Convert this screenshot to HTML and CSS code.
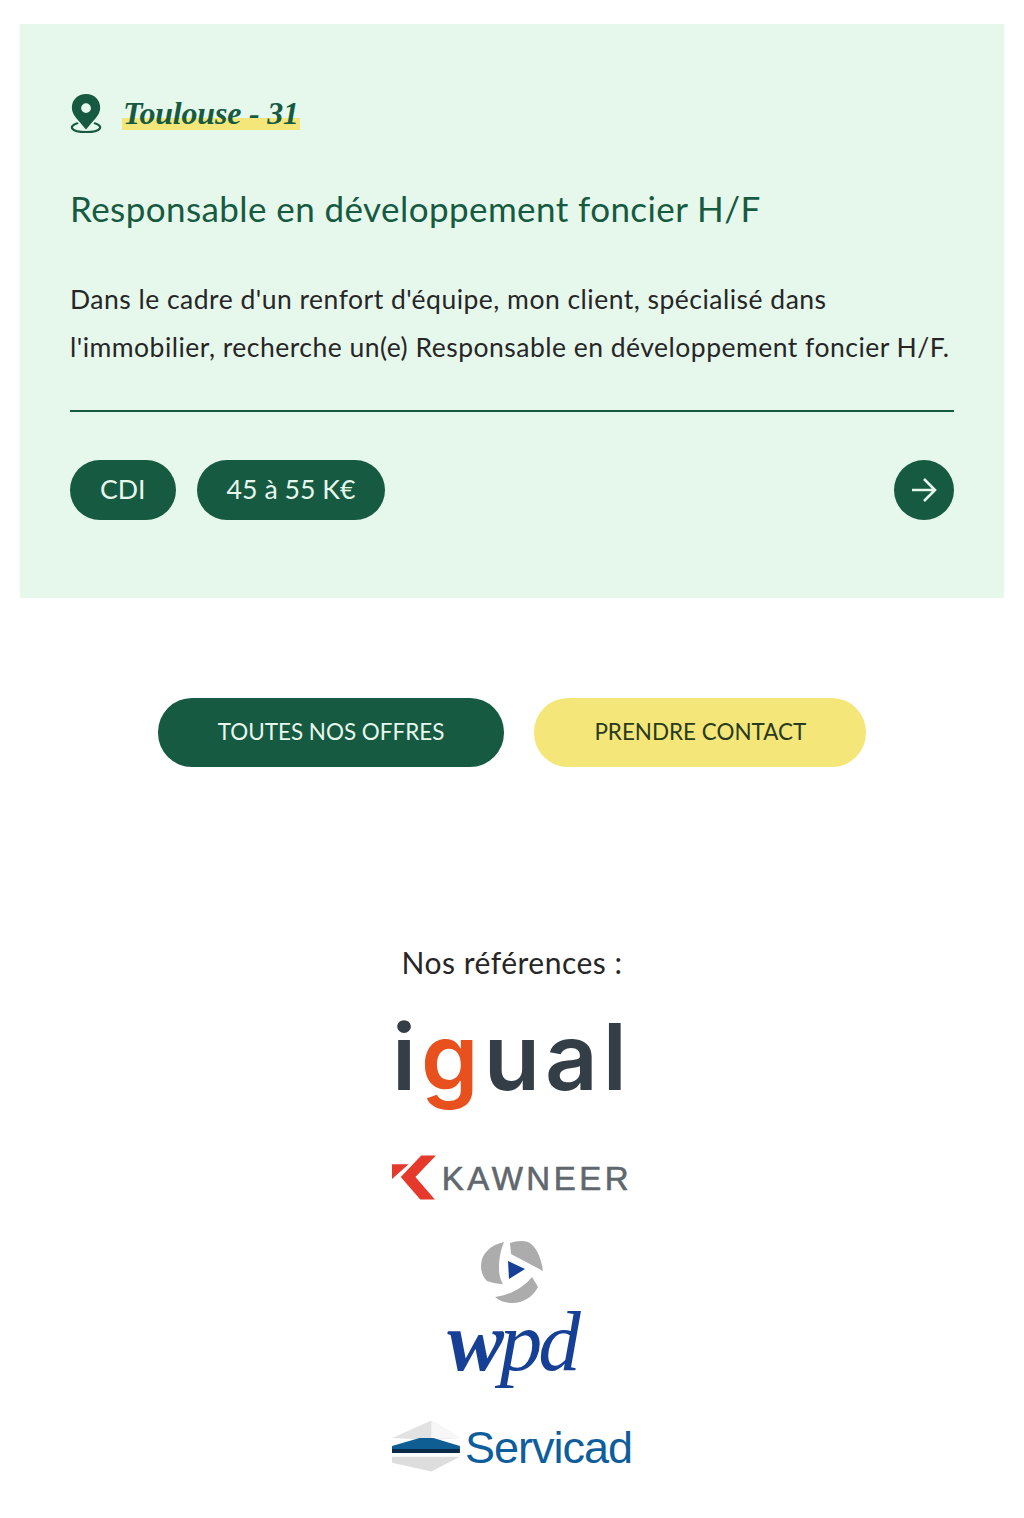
FILE: index.html
```html
<!DOCTYPE html>
<html lang="fr">

<head>
    <meta charset="UTF-8">
    <meta name="viewport" content="width=device-width, initial-scale=1.0">
    <title>Offres et références</title>
    <link rel="stylesheet" href="styles.css">
</head>

<body>
    <div class="page">
        <div class="card">
            <div class="place">
                <svg class="pin" viewBox="1 0 34 42">
                    <path fill="#165a41" fill-rule="evenodd" d="M17 1C8.500 1 2.500 7.300 2.500 15c0 8 7.500 13 14.500 22.500C24 28 31.500 23 31.500 15 31.500 7.300 25.500 1 17 1zm0 9.500a5 5 0 1 1 0 10 5 5 0 0 1 0-10z" />
                    <path fill="none" stroke="#165a41" stroke-width="2.200" stroke-linecap="round" d="M8 31c-9 2.500-7.500 9 9 9s18-6.500 9-9" />
                </svg>
                <span class="city">Toulouse - 31</span>
            </div>
            <h2 class="job">Responsable en développement foncier H/F</h2>
            <p class="desc">Dans le cadre d'un renfort d'équipe, mon client, spécialisé dans l'immobilier, recherche un(e) Responsable en développement foncier H/F.</p>
            <div class="card-foot">
                <span class="tag">CDI</span>
                <span class="tag">45 à 55 K€</span>
                <a class="go" href="#">
                    <svg viewBox="0 0 26 26" width="26" height="26">
                        <path fill="none" stroke="#e6f7ec" stroke-width="2.600" d="M1 13h23M13 2l11 11-11 11" />
                    </svg>
                </a>
            </div>
        </div>

        <div class="actions">
            <a class="btn btn-green" href="#">TOUTES NOS OFFRES</a>
            <a class="btn btn-yellow" href="#">PRENDRE CONTACT</a>
        </div>

        <h3 class="refs-title">Nos références :</h3>
        <div class="refs">
            <div class="logo logo-igual"><span>i</span><span class="orange">g</span><span>ual</span></div>
            <div class="logo logo-kawneer">
                <svg viewBox="0 0 46 45" width="46" height="45">
                    <path fill="#e5392b" d="M0 9h17L0 24zM45 0H30L9 22l20 23h15L24 22z" />
                </svg>
                <span>KAWNEER</span>
            </div>
            <div class="logo logo-wpd">
                <svg viewBox="0 0 64 64" width="64" height="64">
                    <path fill="#acacac" d="M24 2C10 5 1 14 1 26c0 7 3 12 6 15 5 2 11 3 16 3-3-5-4-10-4-16 0-10 2-19 5-26z" />
                    <path fill="#acacac" d="M30 3C36 1 42 0 48 2c8 4 13 15 15 29L31 14z" />
                    <path fill="#acacac" d="M52 37l6 10c-5 10-15 16-26 16-7 0-12-2-17-6 15-2 28-9 37-20z" />
                    <path fill="#163f96" d="M28 21l17 8-16 10z" />
                </svg>
                <span class="wpd-text"><b>w</b>pd</span>
            </div>
            <div class="logo logo-servicad">
                <svg viewBox="0 0 70 52" width="70" height="52">
                    <path fill="#e2e2e2" d="M0 18L40 0l29 18-29 2z" />
                    <path fill="#f7f7f7" d="M40 0l29 18-29 1z" />
                    <path fill="#0e5e94" d="M0 26l28-8h14l27 8v4H0z" />
                    <path fill="#0b2a47" d="M0 29h69v4H0z" />
                    <path fill="#dddddd" d="M0 37h69L40 52 0 43z" />
                </svg>
                <span>Servicad</span>
            </div>
        </div>
    </div>
</body>

</html>
```

FILE: styles.css
```css
* {
    box-sizing: border-box;
    margin: 0;
}

body {
    background: white;
    color: #262626;
    font-family: Lato, "Noto Sans", sans-serif;
}

.page {
    padding: 24px 20px 0;
}

.card {
    background-color: #e6f7ec;
    height: 574px;
    padding: 68px 50px 0;
}

.place {
    align-items: center;
    display: flex;
    gap: 20px;
    height: 42px;
}

.pin {
    height: 41px;
    width: 34px;
}

.city {
    background: linear-gradient(transparent 62%, #f4e678 62%, #f4e678 94%, transparent 94%);
    color: #165a41;
    font-family: "Liberation Serif", serif;
    font-size: 32px;
    font-style: italic;
    font-weight: bold;
    letter-spacing: -0.2px;
    line-height: 38px;
    margin-left: -2px;
    padding: 0 1px;
}

.job {
    color: #165a41;
    font-size: 35px;
    font-weight: 400;
    letter-spacing: 0.42px;
    line-height: 44px;
    margin-top: 52px;
}

.desc {
    font-size: 26.500px;
    letter-spacing: 0.49px;
    line-height: 48px;
    margin-top: 45px;
}

.card-foot {
    align-items: center;
    border-top: 2px solid #165a41;
    display: flex;
    gap: 21px;
    margin-top: 39px;
    padding-top: 48px;
}

.tag {
    background-color: #165a41;
    border-radius: 30px;
    color: #e6f7ec;
    font-size: 26.700px;
    height: 60px;
    line-height: 58px;
    padding: 0 30px;
}

.go {
    align-items: center;
    background-color: #165a41;
    border-radius: 50%;
    display: flex;
    height: 60px;
    justify-content: center;
    margin-left: auto;
    width: 60px;
}

.actions {
    display: flex;
    gap: 30px;
    justify-content: center;
    margin-top: 100px;
}

.btn {
    border-radius: 34px;
    font-size: 22.450px;
    height: 69px;
    line-height: 67px;
    padding: 0 60px;
    text-decoration: none;
    white-space: nowrap;
}

.btn-green {
    background-color: #165a41;
    color: #e6f7ec;
}

.btn-yellow {
    background-color: #f4e678;
    color: #2a3a1e;
}

.refs-title {
    font-size: 30px;
    font-weight: 400;
    letter-spacing: 0.5px;
    line-height: 40px;
    margin-top: 175px;
    text-align: center;
}

.refs {
    align-items: center;
    display: flex;
    flex-direction: column;
    margin-top: 38px;
}

.logo {
    width: 240px;
}

.logo-igual {
    color: #333e46;
    font-family: Inter, sans-serif;
    font-size: 92px;
    font-weight: 600;
    height: 93px;
    letter-spacing: 5px;
    line-height: 74px;
    white-space: nowrap;
}

.orange {
    color: #e8501d;
}

.logo-kawneer {
    align-items: center;
    color: #60676d;
    display: flex;
    font-family: "Liberation Sans", sans-serif;
    font-size: 33px;
    gap: 5px;
    height: 45px;
    letter-spacing: 3.500px;
    margin-top: 42px;
    -webkit-text-stroke: 0.6px #60676d;
    white-space: nowrap;
}

.logo-kawneer span {
    margin-top: 2px;
}

.logo-wpd {
    align-items: center;
    color: #163f96;
    display: flex;
    flex-direction: column;
    height: 150px;
    margin-top: 40px;
}

.wpd-text {
    font-family: "Liberation Serif", serif;
    font-size: 85px;
    font-style: italic;
    letter-spacing: -4px;
    line-height: 75px;
}

.logo-servicad {
    align-items: center;
    color: #0e5e9c;
    display: flex;
    font-family: "Liberation Sans", sans-serif;
    font-size: 45px;
    gap: 4px;
    height: 52px;
    letter-spacing: -1px;
    margin-top: 30px;
    white-space: nowrap;
}

.logo-servicad span {
    margin-top: 4px;
}
```
